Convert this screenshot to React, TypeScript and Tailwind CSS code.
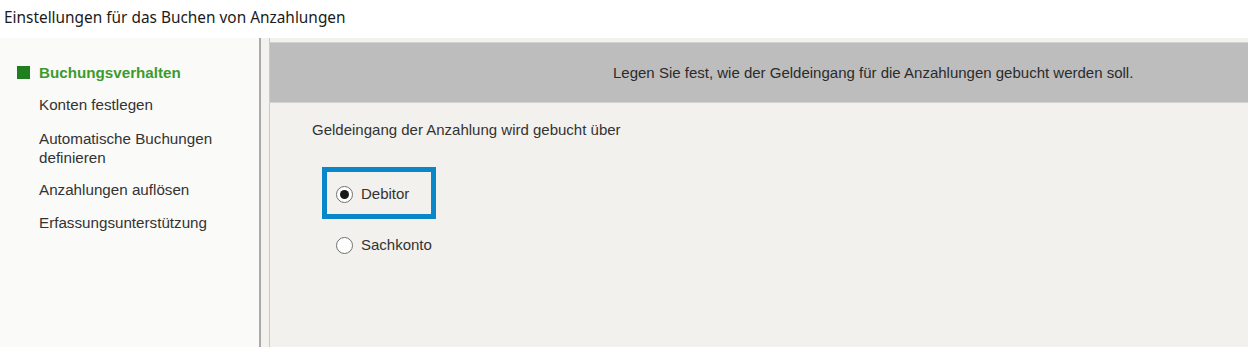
import React from "react";

function Radio({ checked }: { checked?: boolean }) {
  return (
    <span className="flex h-[17px] w-[17px] items-center justify-center rounded-full border border-[#707070] bg-white">
      {checked && <span className="h-[9px] w-[9px] rounded-full bg-[#1a1a1a]" />}
    </span>
  );
}

export default function App() {
  const arial = { fontFamily: '"Liberation Sans", Arial, sans-serif' };
  return (
    <div className="flex h-[347px] w-[1248px] flex-col overflow-hidden bg-white" style={arial}>
      <div
        className="h-[38px] shrink-0 pl-[4px] pt-[8px] text-[15.4px] leading-[20px] text-[#1a1a1a]"
        style={{ fontFamily: '"Noto Sans", "Open Sans", sans-serif' }}
      >
        Einstellungen für das Buchen von Anzahlungen
      </div>
      <div className="flex flex-1">
        <div className="w-[259px] shrink-0 bg-[#fafaf8] pt-[25px] text-[15.2px] leading-[19px] text-[#333333]">
          <div className="flex items-center">
            <span className="ml-[17px] mr-[9px] h-[13px] w-[13px] bg-[#1f7f1f]" />
            <span className="font-bold text-[#3d9a2d]">Buchungsverhalten</span>
          </div>
          <div className="ml-[39px] mt-[13px]">Konten festlegen</div>
          <div className="ml-[39px] mt-[15px] w-[190px]">Automatische Buchungen definieren</div>
          <div className="ml-[39px] mt-[13px]">Anzahlungen auflösen</div>
          <div className="ml-[39px] mt-[14px]">Erfassungsunterstützung</div>
        </div>
        <div className="w-[2px] shrink-0 bg-[#a9a9a9]" />
        <div className="w-[8px] shrink-0 bg-[#f3f2ef]" />
        <div className="w-[1px] shrink-0 bg-[#c9c9c9]" />
        <div className="flex flex-1 flex-col bg-[#f2f1ee] pt-[4px]">
          <div className="flex h-[61px] items-center border-t border-b border-[#d2d2d2] bg-[#bdbdbd] pl-[343px] pt-[2px] text-[15px] text-[#2b2b2b]">
            Legen Sie fest, wie der Geldeingang für die Anzahlungen gebucht werden soll.
          </div>
          <div className="pl-[42px] pt-[18px] text-[15px] leading-[18px] text-[#333333]">
            Geldeingang der Anzahlung wird gebucht über
          </div>
          <div className="ml-[52px] mt-[28px] flex h-[52px] w-[114px] items-center gap-[8px] border-[5px] border-[#0a87c9] pl-[9px] pt-[3px] text-[15px] text-[#333333]">
            <Radio checked />
            <span>Debitor</span>
          </div>
          <div className="ml-[66px] mt-[15px] flex items-center gap-[8px] text-[15px] text-[#333333]">
            <Radio />
            <span>Sachkonto</span>
          </div>
        </div>
      </div>
    </div>
  );
}
